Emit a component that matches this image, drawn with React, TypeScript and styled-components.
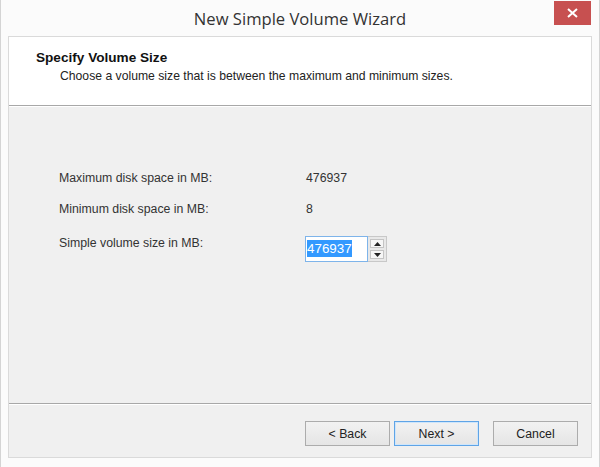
import styled, { createGlobalStyle } from "styled-components";

const GlobalStyle = createGlobalStyle`
  html, body {
    margin: 0;
    padding: 0;
    background: #ffffff;
  }
  * {
    box-sizing: border-box;
  }
`;

const Window = styled.div`
  width: 600px;
  height: 467px;
  display: flex;
  flex-direction: column;
  background: #fbfbfb;
  border-left: 1px solid #d4d4d4;
  border-right: 1px solid #d4d4d4;
  padding: 0 7px 9px 7px;
  font-family: "Liberation Sans", Arial, sans-serif;
  color: #1e1e1e;
`;

const TitleBar = styled.div`
  height: 36px;
  display: grid;
  grid-template-columns: 1fr auto 1fr;
  align-items: start;
`;

const Caption = styled.div`
  grid-column: 2;
  padding-top: 7px;
  font-family: "Open Sans", "Noto Sans", sans-serif;
  font-size: 16.6px;
  line-height: 24px;
  color: #333;
`;

const CloseButton = styled.button`
  grid-column: 3;
  justify-self: end;
  margin-top: 1px;
  margin-right: 1px;
  width: 37px;
  height: 24px;
  border: none;
  padding: 0;
  background: #c75050;
  display: flex;
  align-items: center;
  justify-content: center;
`;

const Body = styled.div`
  flex: 1;
  display: flex;
  flex-direction: column;
  border: 1px solid #dadada;
  background: #f0f0f0;
`;

const Header = styled.div`
  height: 69px;
  background: #ffffff;
  padding: 13px 0 0 27px;
  border-bottom: 1px solid #a8a8a8;
  box-shadow: 0 1px 0 #ffffff;
`;

const HeaderTitle = styled.div`
  font-size: 13.6px;
  font-weight: bold;
  line-height: 16px;
  color: #111;
`;

const HeaderText = styled.div`
  margin-top: 3px;
  padding-left: 24px;
  font-size: 12.2px;
  line-height: 15px;
  color: #222;
`;

const Main = styled.div`
  flex: 1;
  padding: 64px 0 0 50px;
  border-bottom: 1px solid #a8a8a8;
`;

const Fields = styled.div`
  display: grid;
  grid-template-columns: 246px auto;
  grid-auto-rows: 31px;
  font-size: 12.3px;
  color: #333;
`;

const Label = styled.div<{ $offset?: number }>`
  line-height: 16px;
  margin-top: ${(p) => p.$offset ?? 0}px;
`;

const Value = styled.div`
  line-height: 16px;
  padding-left: 1px;
`;

const Spinner = styled.div`
  display: flex;
  margin-top: 4px;
  height: 26px;
`;

const SpinInput = styled.div`
  width: 63px;
  height: 26px;
  border: 1px solid #7eb4ea;
  background: #fff;
  padding: 4px 0 0 1px;
`;

const Selected = styled.span`
  background: #3399ff;
  color: #fff;
  font-size: 13.4px;
  line-height: 16px;
  padding: 1px 0;
`;

const SpinButtons = styled.div`
  width: 19px;
  height: 26px;
  border: 1px solid #c8c8c8;
  border-left: none;
  display: flex;
  flex-direction: column;
  gap: 2px;
  padding: 2px 2px;
  background: #e8e8e8;
`;

const SpinButton = styled.div`
  flex: 1;
  background: #f6f6f6;
  border: 1px solid #c4c4c4;
  display: flex;
  align-items: center;
  justify-content: center;
`;

const Footer = styled.div`
  height: 53px;
  display: flex;
  justify-content: flex-end;
  align-items: flex-start;
  padding: 16px 13px 0 0;
  border-top: 1px solid #ffffff;
`;

const Button = styled.button<{ $focused?: boolean; $gap?: number }>`
  width: 85px;
  height: 25px;
  margin-left: ${(p) => p.$gap ?? 0}px;
  font-family: "Liberation Sans", Arial, sans-serif;
  font-size: 12.3px;
  color: #222;
  background: linear-gradient(#f2f2f2, #e5e5e5);
  border: 1px solid ${(p) => (p.$focused ? "#5fa4e6" : "#acacac")};
  box-shadow: ${(p) => (p.$focused ? "inset 0 0 0 1px #cfe6fb" : "none")};
  padding: 0;
`;

const Arrow = ({ up }: { up?: boolean }) => (
  <svg width="7" height="4" viewBox="0 0 7 4">
    <path d={up ? "M0 4 L3.5 0 L7 4 Z" : "M0 0 L3.5 4 L7 0 Z"} fill="#222" />
  </svg>
);

const App = () => {
  return (
    <>
      <GlobalStyle />
      <Window>
        <TitleBar>
          <Caption>New Simple Volume Wizard</Caption>
          <CloseButton aria-label="Close">
            <svg width="11" height="10" viewBox="0 0 11 10">
              <path d="M1 1 L10 9 M10 1 L1 9" stroke="#fff" strokeWidth="2" />
            </svg>
          </CloseButton>
        </TitleBar>
        <Body>
          <Header>
            <HeaderTitle>Specify Volume Size</HeaderTitle>
            <HeaderText>
              Choose a volume size that is between the maximum and minimum sizes.
            </HeaderText>
          </Header>
          <Main>
            <Fields>
              <Label>Maximum disk space in MB:</Label>
              <Value>476937</Value>
              <Label>Minimum disk space in MB:</Label>
              <Value>8</Value>
              <Label $offset={3}>Simple volume size in MB:</Label>
              <Spinner>
                <SpinInput>
                  <Selected>476937</Selected>
                </SpinInput>
                <SpinButtons>
                  <SpinButton>
                    <Arrow up />
                  </SpinButton>
                  <SpinButton>
                    <Arrow />
                  </SpinButton>
                </SpinButtons>
              </Spinner>
            </Fields>
          </Main>
          <Footer>
            <Button>&lt; Back</Button>
            <Button $focused $gap={4}>
              Next &gt;
            </Button>
            <Button $gap={14}>Cancel</Button>
          </Footer>
        </Body>
      </Window>
    </>
  );
};

export default App;
